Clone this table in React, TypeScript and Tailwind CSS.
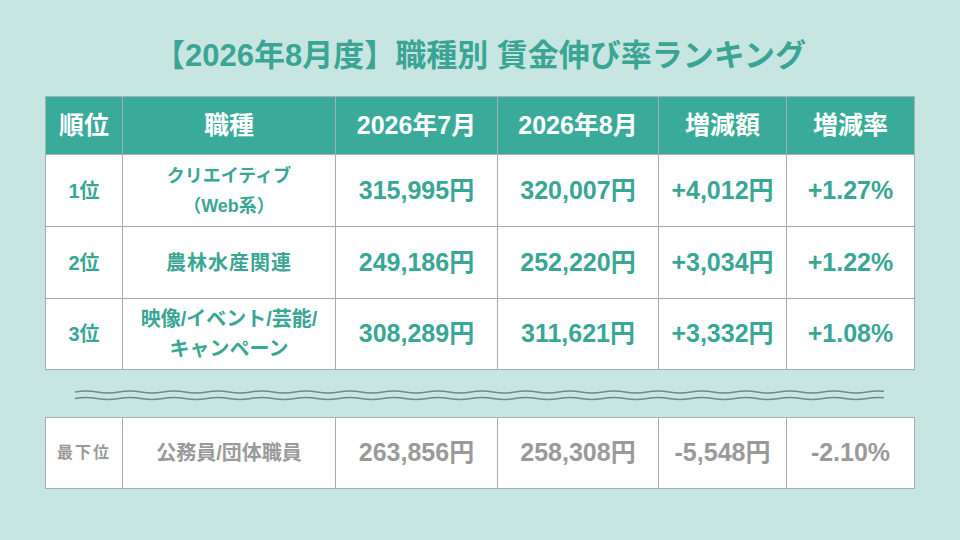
const rows = [
  { rank: "1位", job: ["クリエイティブ", "（Web系）"], size: "text-[18px]", jul: "315,995円", aug: "320,007円", diff: "+4,012円", rate: "+1.27%" },
  { rank: "2位", job: ["農林水産関連"], size: "text-[20px] tracking-[1px]", jul: "249,186円", aug: "252,220円", diff: "+3,034円", rate: "+1.22%" },
  { rank: "3位", job: ["映像/イベント/芸能/", "キャンペーン"], size: "text-[20px]", jul: "308,289円", aug: "311,621円", diff: "+3,332円", rate: "+1.08%" },
];

const font = { fontFamily: '"Liberation Sans", "Noto Sans CJK JP", sans-serif' };

function Wave({ y }: { y: number }) {
  // 波線: 周期 44px の滑らかな曲線
  let d = `M0 ${y}`;
  for (let x = 0; x < 810; x += 44) {
    d += ` q11 -2.2 22 0 q11 2.2 22 0`;
  }
  return <path d={d} fill="none" stroke="#6f8986" strokeWidth="1.5" />;
}

function Cols() {
  return (
    <colgroup>
      <col className="w-[77px]" />
      <col className="w-[213px]" />
      <col className="w-[162px]" />
      <col className="w-[161px]" />
      <col className="w-[128px]" />
      <col className="w-[128px]" />
    </colgroup>
  );
}

export default function App() {
  return (
    <div className="w-[960px] h-[540px] bg-[#c8e6e1] overflow-hidden font-bold" style={font}>
      <h1 className="h-[96px] pt-[38px] text-center text-[31px] leading-[36px] text-[#3aa595]">
        【2026年8月度】職種別 賃金伸び率ランキング
      </h1>

      <table className="ml-[45px] w-[869px] table-fixed border-collapse bg-white text-center">
        <Cols />
        <thead>
          <tr className="h-[58px] bg-[#3aab9b] text-white text-[25px]">
            {["順位", "職種", "2026年7月", "2026年8月", "増減額", "増減率"].map((h) => (
              <th key={h} className="border border-[#9fb3b0] font-bold">{h}</th>
            ))}
          </tr>
        </thead>
        <tbody className="text-[#3aa696]">
          {rows.map((r, i) => (
            <tr key={r.rank} className={i === 2 ? "h-[71px]" : "h-[72px]"}>
              <td className="border border-[#ababab] text-[20px]">{r.rank}</td>
              <td className={`border border-[#ababab] leading-[30px] ${r.size}`}>
                {r.job.map((j) => (
                  <div key={j}>{j}</div>
                ))}
              </td>
              <td className="border border-[#ababab] text-[25px]">{r.jul}</td>
              <td className="border border-[#ababab] text-[25px]">{r.aug}</td>
              <td className="border border-[#ababab] text-[25px]">{r.diff}</td>
              <td className="border border-[#ababab] text-[25px]">{r.rate}</td>
            </tr>
          ))}
        </tbody>
      </table>

      <svg className="ml-[75px] mt-[12px] block" width="809" height="24" viewBox="0 0 809 24">
        <Wave y={10} />
        <Wave y={16.5} />
      </svg>

      <table className="ml-[45px] mt-[11px] w-[869px] table-fixed border-collapse bg-white text-center text-[#9a9a9a]">
        <Cols />
        <tbody>
          <tr className="h-[71px]">
            <td className="border border-[#ababab] text-[16px] tracking-[2px]">最下位</td>
            <td className="border border-[#ababab] text-[20px]">公務員/団体職員</td>
            <td className="border border-[#ababab] text-[25px]">263,856円</td>
            <td className="border border-[#ababab] text-[25px]">258,308円</td>
            <td className="border border-[#ababab] text-[25px]">-5,548円</td>
            <td className="border border-[#ababab] text-[25px]">-2.10%</td>
          </tr>
        </tbody>
      </table>
    </div>
  );
}
